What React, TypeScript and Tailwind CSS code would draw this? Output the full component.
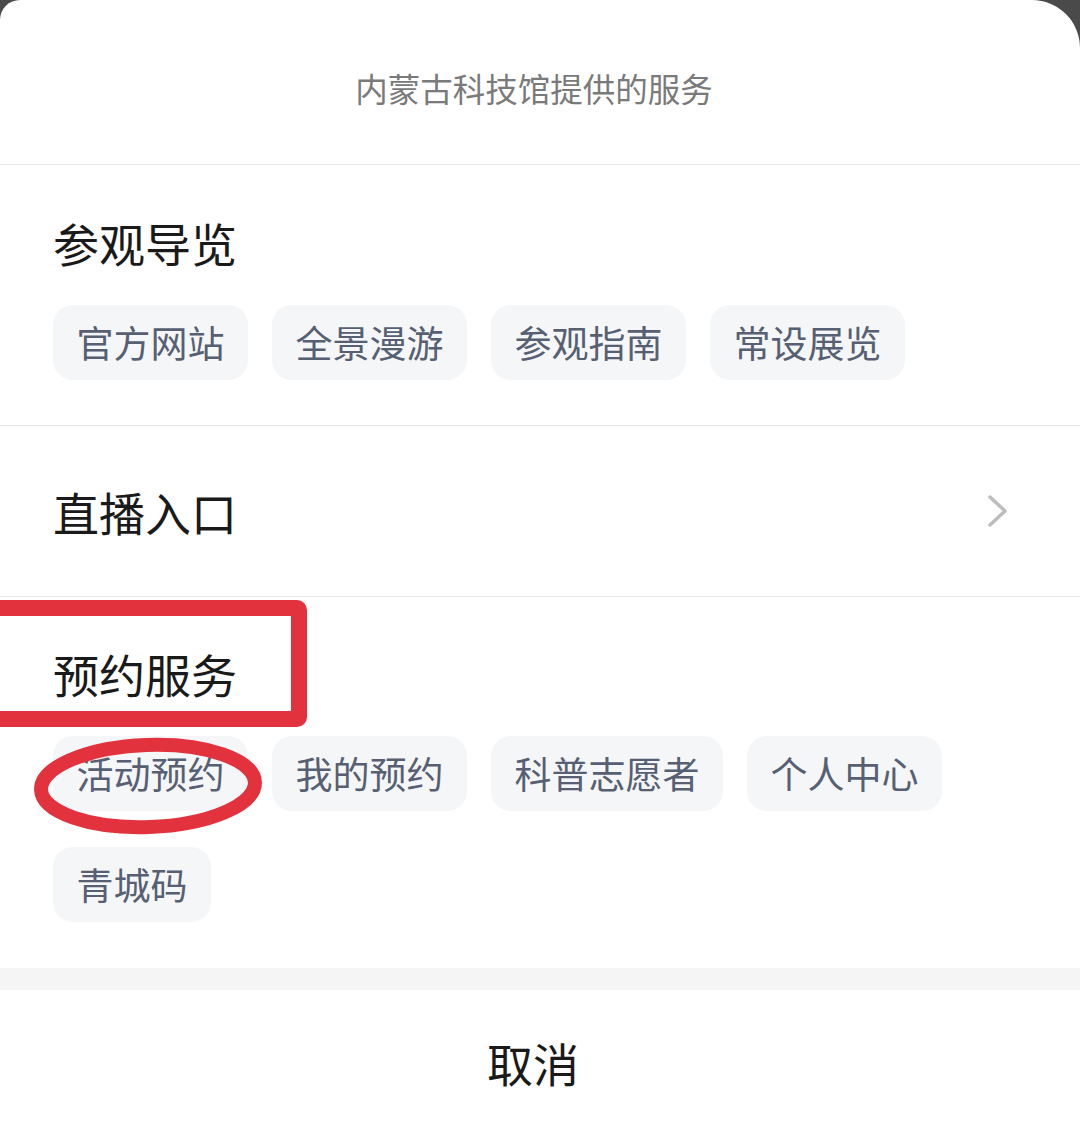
const guide = ['官方网站', '全景漫游', '参观指南', '常设展览']
const booking = ['活动预约', '我的预约', '科普志愿者', '个人中心', '青城码']

function Chip({ label }: { label: string }) {
  return (
    <div className="h-[75px] px-[23.5px] flex items-center rounded-[20px] bg-[#f5f6f8] text-[37px] leading-none text-[#566072]">
      {label}
    </div>
  )
}

export default function App() {
  return (
    <div className="relative w-[1080px] h-[1137px] overflow-hidden bg-[#4a4a4a] font-['Noto_Sans_CJK_SC','Noto_Sans',sans-serif]">
      <div className="flex flex-col h-full bg-white rounded-tl-[20px] rounded-tr-[48px]">
        {/* Title */}
        <div className="h-[165px] flex items-center justify-center pt-[12px] pr-[12px] text-[32.5px] text-[#7a7a7a] border-b-[1.5px] border-[#e6e6e6]">
          内蒙古科技馆提供的服务
        </div>

        {/* 参观导览 */}
        <section className="px-[53px] pt-[55px] pb-[45px] border-b-[1.5px] border-[#e6e6e6]">
          <h2 className="text-[46px] leading-[45px] text-[#1a1a1a]">参观导览</h2>
          <div className="mt-[40px] flex flex-wrap gap-x-6 gap-y-9">
            {guide.map((g) => (
              <Chip key={g} label={g} />
            ))}
          </div>
        </section>

        {/* 直播入口 */}
        <div className="h-[171px] px-[53px] flex items-center justify-between border-b-[1.5px] border-[#e6e6e6]">
          <span className="text-[46px] leading-none text-[#1a1a1a]">直播入口</span>
          <svg width="24" height="36" viewBox="0 0 24 36" className="mr-[17px]">
            <path d="M4 4 L19 18 L4 32" fill="none" stroke="#bdbdbd" strokeWidth="3.5" strokeLinecap="round" strokeLinejoin="round" />
          </svg>
        </div>

        {/* 预约服务 */}
        <section className="px-[53px] pt-[54px] pb-[46px]">
          <h2 className="text-[46px] leading-[45px] text-[#1a1a1a]">预约服务</h2>
          <div className="mt-[40px] flex flex-wrap gap-x-6 gap-y-9">
            {booking.map((b) => (
              <Chip key={b} label={b} />
            ))}
          </div>
        </section>

        <div className="h-[22px] bg-[#f5f5f5]" />

        {/* Cancel */}
        <div className="flex-1 flex items-center justify-center pb-[2px] pr-[14px] text-[46px] text-[#1a1a1a]">取消</div>
      </div>

      {/* red annotations */}
      <div className="absolute left-[-20px] top-[600px] w-[327px] h-[127px] border-[16px] border-[#e2323e] rounded-[10px]" />
      <svg className="absolute left-[25px] top-[730px]" width="250" height="110" viewBox="0 0 250 110">
        <ellipse cx="123" cy="56" rx="107" ry="41" fill="none" stroke="#e2323e" strokeWidth="14" transform="rotate(-2 123 56)" />
      </svg>
    </div>
  )
}
